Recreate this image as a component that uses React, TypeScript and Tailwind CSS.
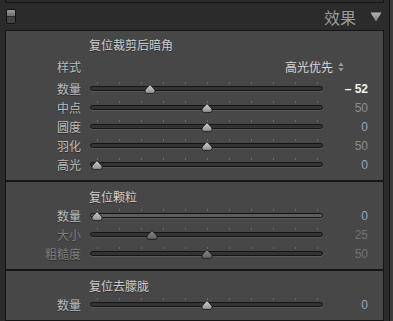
const cjk = "font-['Noto_Sans_CJK_SC',sans-serif]";
const num = "font-['Liberation_Sans',Arial,sans-serif]";

type Row = {
  label: string;
  value: string;
  frac: number;
  tone?: "active" | "blue" | "grey" | "dim";
  dim?: boolean;
  light?: boolean;
};

const valueColor = {
  active: "text-[#f0f0f0] font-semibold",
  blue: "text-[#95a8bf]",
  grey: "text-[#8c8c8c]",
  dim: "text-[#727272]",
};

function Thumb({ dim }: { dim?: boolean }) {
  return (
    <svg width="12" height="10" viewBox="0 0 12 10">
      <defs>
        <linearGradient id={dim ? "thd" : "thl"} x1="0" y1="0" x2="0" y2="1">
          <stop offset="0" stopColor={dim ? "#8a8a8a" : "#d2d2d2"} />
          <stop offset="1" stopColor={dim ? "#5e5e5e" : "#8e8e8e"} />
        </linearGradient>
      </defs>
      <path
        d="M6 0.6 L10.2 5 Q11.4 6.4 11 8 Q10.6 9.4 9 9.4 L3 9.4 Q1.4 9.4 1 8 Q0.6 6.4 1.8 5 Z"
        fill={`url(#${dim ? "thd" : "thl"})`}
        stroke="#1c1c1c"
        strokeWidth="0.9"
      />
    </svg>
  );
}

function Slider({ frac, dim, light }: { frac: number; dim?: boolean; light?: boolean }) {
  const ticks = Array.from({ length: 11 }, (_, i) => i);
  return (
    <div className="relative h-full flex items-center">
      {ticks.map((i) => (
        <div
          key={i}
          className="absolute top-[3px] w-px h-[2px] bg-[#6a6a6a]"
          style={{ left: 7 + i * 22 }}
        />
      ))}
      <div
        className={`w-full h-[5px] rounded-full border border-[#141414] shadow-[0_1px_0_#595959] ${
          light ? "bg-[#5d5d5d]" : "bg-[#333333]"
        }`}
      />
      <div
        className="absolute top-[5px] flex"
        style={{ left: 7 + frac * 220 - 6 }}
      >
        <Thumb dim={dim} />
      </div>
    </div>
  );
}

function SliderRow({ row }: { row: Row }) {
  return (
    <>
      <div
        className={`h-[19px] flex items-center justify-end text-[12px] ${cjk} ${
          row.dim ? "text-[#7e7e7e]" : "text-[#bdbdbd]"
        } [text-shadow:0_1px_0_#2e2e2e]`}
      >
        {row.label}
      </div>
      <Slider frac={row.frac} dim={row.dim} light={row.light} />
      <div
        className={`h-[19px] flex items-center justify-end text-[12px] ${num} ${
          valueColor[row.tone ?? "grey"]
        }`}
      >
        {row.value}
      </div>
    </>
  );
}

function Title({ text }: { text: string }) {
  return (
    <div
      className={`col-start-2 col-span-2 h-[19px] flex items-center -ml-px text-[12px] text-[#cfcfcf] ${cjk} [text-shadow:0_1px_0_#2e2e2e]`}
    >
      {text}
    </div>
  );
}

const grid = "grid grid-cols-[75px_233px_36px] gap-x-[9px] items-center";

const vignette: Row[] = [
  { label: "数量", value: "– 52", frac: 0.24, tone: "active" },
  { label: "中点", value: "50", frac: 0.5 },
  { label: "圆度", value: "0", frac: 0.5, tone: "blue" },
  { label: "羽化", value: "50", frac: 0.5 },
  { label: "高光", value: "0", frac: 0, tone: "blue" },
];

const grain: Row[] = [
  { label: "数量", value: "0", frac: 0, tone: "blue", light: true },
  { label: "大小", value: "25", frac: 0.25, tone: "dim", dim: true },
  { label: "粗糙度", value: "50", frac: 0.5, tone: "dim", dim: true },
];

const dehaze: Row[] = [{ label: "数量", value: "0", frac: 0.5, tone: "blue" }];

export default function App() {
  return (
    <div className="w-[393px] h-[321px] bg-[#2b2b2b] overflow-hidden flex">
      <div className="w-[389px] px-[5px] flex flex-col">
        <div className="h-[3px] border-x border-b border-[#151515] shrink-0" />

        <div className="h-[27px] shrink-0 flex items-center pl-px pr-[2px]">
          <div className="w-[10px] h-[15px] border border-[#111] rounded-[2px] flex flex-col overflow-hidden">
            <div className="flex-1 bg-gradient-to-b from-[#9c9c9c] to-[#6e6e6e] border-b border-[#2a2a2a]" />
            <div className="flex-1 bg-[#434343]" />
          </div>
          <div className={`ml-auto text-[16px] text-[#9a9a9a] ${cjk}`}>效果</div>
          <svg width="12" height="10" viewBox="0 0 12 10" className="ml-[14px] mt-px">
            <defs>
              <linearGradient id="hdr" x1="0" y1="0" x2="0" y2="1">
                <stop offset="0" stopColor="#b4b4b4" />
                <stop offset="1" stopColor="#7c7c7c" />
              </linearGradient>
            </defs>
            <path d="M0.5 0.5 L11.5 0.5 L6 9.5 Z" fill="url(#hdr)" />
          </svg>
        </div>

        <div className="flex-1 border border-[#151515] bg-[#474747]">
          <div className={`${grid} pt-[4px] pb-[6px]`}>
            <Title text="复位裁剪后暗角" />
            <div
              className={`h-[25px] flex items-center justify-end text-[12px] text-[#bdbdbd] ${cjk} [text-shadow:0_1px_0_#2e2e2e]`}
            >
              样式
            </div>
            <div className="col-span-2 h-[25px] flex items-center justify-end pr-[24px] gap-[5px]">
              <span className={`text-[12px] text-[#d8d8d8] ${cjk}`}>高光优先</span>
              <svg width="6" height="10" viewBox="0 0 6 10">
                <path d="M3 0.5 L5.6 4 L0.4 4 Z" fill="#9a9a9a" />
                <path d="M3 9.5 L5.6 6 L0.4 6 Z" fill="#9a9a9a" />
              </svg>
            </div>
            {vignette.map((r) => (
              <SliderRow key={r.label} row={r} />
            ))}
          </div>

          <div className="h-[2px] bg-[#161616]" />

          <div className={`${grid} pt-[5px] pb-[6px]`}>
            <Title text="复位颗粒" />
            {grain.map((r) => (
              <SliderRow key={r.label} row={r} />
            ))}
          </div>

          <div className="h-[2px] bg-[#161616]" />

          <div className={`${grid} pt-[5px]`}>
            <Title text="复位去朦胧" />
            {dehaze.map((r) => (
              <SliderRow key={r.label} row={r} />
            ))}
          </div>
        </div>
      </div>
      <div className="w-[4px] border-l border-[#111] bg-[#3c3c3c]" />
    </div>
  );
}
